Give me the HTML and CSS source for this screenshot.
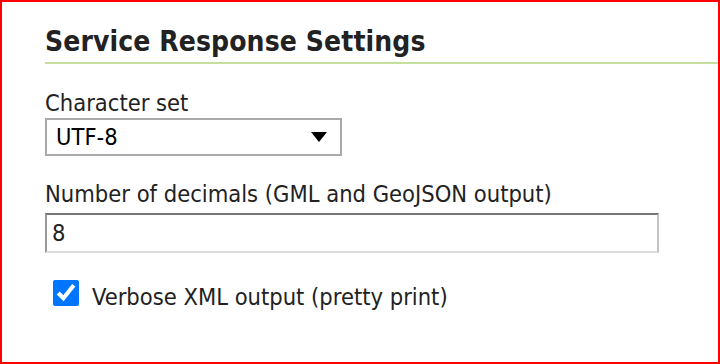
FILE: index.html
```html
<!DOCTYPE html>
<html lang="en">
<head>
  <meta charset="UTF-8" />
  <title>Service Response Settings</title>
  <meta name="viewport" content="width=device-width, initial-scale=1.0">
  <link rel="stylesheet" href="styles.css">
</head>
<body>

  <div class="frame">
    <h2 class="section-title">Service Response Settings</h2>

    <div class="fields">
      <label class="field-label" for="charset">Character set</label>
      <div class="select-wrap">
        <select id="charset" class="select">
          <option>UTF-8</option>
          <option>ISO-8859-1</option>
        </select>
        <svg class="select-arrow" width="16" height="10" viewBox="0 0 16 10">
          <path d="M0 0 H16 L8 10 Z" fill="#000"/>
        </svg>
      </div>

      <label class="field-label field-label--gap" for="decimals">Number of decimals (GML and GeoJSON output)</label>
      <input id="decimals" class="text-input" type="text" value="8">

      <div class="check-row">
        <input id="verbose" class="checkbox" type="checkbox" checked>
        <label class="check-label" for="verbose">Verbose XML output (pretty print)</label>
      </div>
    </div>
  </div>

</body>
</html>
```

FILE: styles.css
```css
html, body {
  margin: 0;
  padding: 0;
  background: #fff;
}

body {
  font-family: "DejaVu Sans Condensed", "DejaVu Sans", sans-serif;
  color: #222;
}

.frame {
  box-sizing: border-box;
  height: 364px;
  border: 2px solid #ff0000;
  padding: 23px 0 0 43px;
}

.section-title {
  margin: 0;
  font-size: 28px;
  line-height: 34px;
  font-weight: bold;
  letter-spacing: 0.1px;
  padding-bottom: 3px;
  border-bottom: 2px solid #c6df9c;
}

.fields {
  padding-top: 25px;
}

.field-label {
  display: block;
  font-size: 23.5px;
  line-height: 28px;
  margin-bottom: 1px;
}

.field-label--gap {
  margin-top: 24px;
  margin-bottom: 5px;
}

.select-wrap {
  position: relative;
  display: inline-flex;
}

.select {
  appearance: none;
  -webkit-appearance: none;
  box-sizing: border-box;
  width: 297px;
  height: 38px;
  border: 2px solid #a9a9a9;
  border-radius: 0;
  background: #fff;
  padding: 0 0 0 9px;
  font-family: inherit;
  font-size: 23.5px;
  color: #000;
}

.select-arrow {
  position: absolute;
  right: 15px;
  top: 14px;
  pointer-events: none;
}

.text-input {
  display: block;
  box-sizing: border-box;
  width: 614px;
  height: 40px;
  border: 2px solid;
  border-color: #767676 #c4c4c4 #dcdcdc #999;
  padding: 0 5px;
  font-family: inherit;
  font-size: 23.5px;
  color: #222;
  outline: none;
}

.check-row {
  display: flex;
  align-items: flex-start;
  margin-top: 27px;
  padding-left: 8px;
  font-size: 23.5px;
  line-height: 28px;
}

.checkbox {
  flex: none;
  width: 26px;
  height: 26px;
  margin: 0 13px 0 0;
  accent-color: #0075ff;
}

.check-label {
  padding-top: 3px;
}
```
